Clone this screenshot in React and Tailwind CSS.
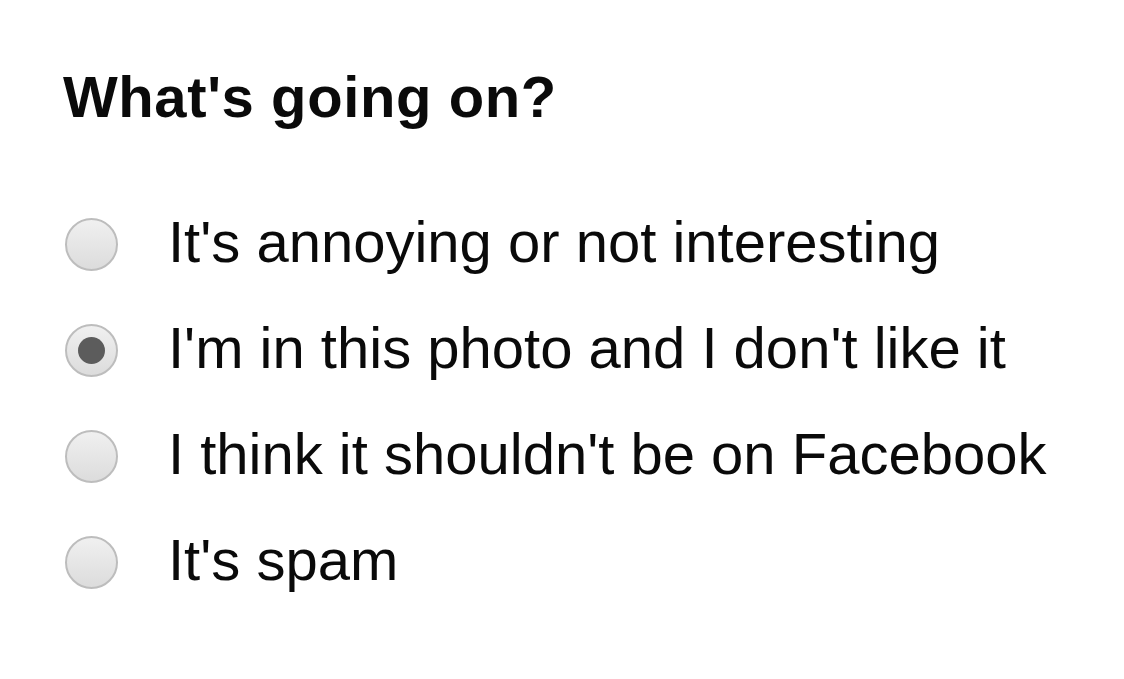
import React from "react";

const options = [
  { label: "It's annoying or not interesting", checked: false },
  { label: "I'm in this photo and I don't like it", checked: true },
  { label: "I think it shouldn't be on Facebook", checked: false },
  { label: "It's spam", checked: false },
];

function Radio({ checked }) {
  return (
    <div className="w-[53px] h-[53px] rounded-full border-2 border-[#bdbdbd] bg-[linear-gradient(#f0f0f0,#dcdcdc)] flex items-center justify-center shrink-0">
      {checked && <div className="w-[27px] h-[27px] rounded-full bg-[#5c5c5c]" />}
    </div>
  );
}

export default function App() {
  return (
    <div className="w-[1124px] h-[679px] bg-white text-[#0a0a0a] font-['Liberation_Sans',Arial,sans-serif] pl-[63px] pt-[68px]">
      <h1 className="text-[58px] leading-[58px] font-bold tracking-[0.6px]">What's going on?</h1>
      <div className="mt-[87px] flex flex-col gap-[48px]">
        {options.map((o) => (
          <label key={o.label} className="flex items-center h-[58px]">
            <div className="ml-[2px] mt-[4px]">
              <Radio checked={o.checked} />
            </div>
            <span className="ml-[50px] text-[58px] leading-[58px]">{o.label}</span>
          </label>
        ))}
      </div>
    </div>
  );
}
